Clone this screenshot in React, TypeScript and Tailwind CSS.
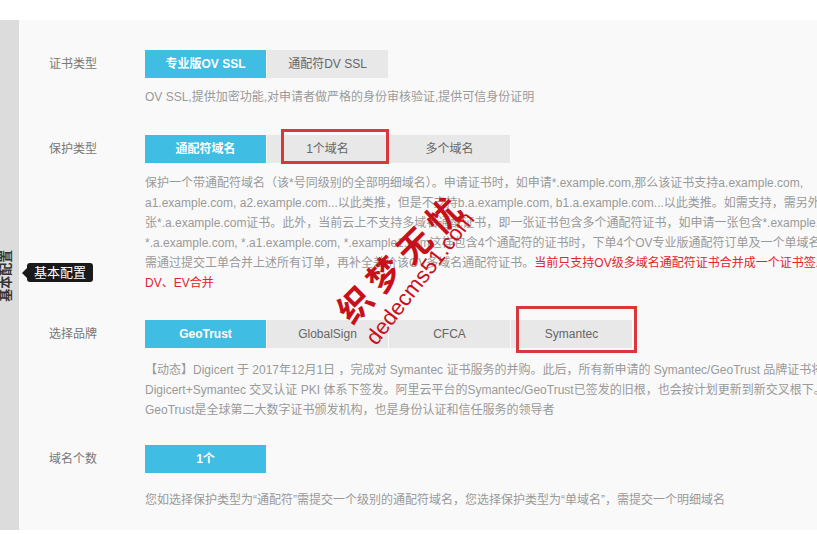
import React from 'react';

type Opt = { label: string; active?: boolean };

const Tabs = ({ options }: { options: Opt[] }) => (
  <div className="flex gap-[1px]">
    {options.map((o) => (
      <div
        key={o.label}
        className={
          o.active
            ? 'w-[121px] h-[28px] shrink-0 flex items-center justify-center bg-[#3fbde3] text-white text-[12px] font-bold'
            : 'w-[121px] h-[28px] shrink-0 flex items-center justify-center bg-[#e8e8e8] text-[#666] text-[12px]'
        }
      >
        {o.label}
      </div>
    ))}
  </div>
);

const Row = ({
  label,
  options,
  lines,
  className,
  gap,
}: {
  label: string;
  options: Opt[];
  lines: React.ReactNode[];
  className?: string;
  gap: string;
}) => (
  <div className={`flex ${className ?? ''}`}>
    <div className="w-[96px] shrink-0 h-[28px] flex items-center text-[12px] text-[#777]">{label}</div>
    <div className="flex flex-col">
      <Tabs options={options} />
      <div className={`${gap} text-[12px] leading-5 text-[#999] whitespace-nowrap`}>
        {lines.map((l, i) => (
          <div key={i}>{l}</div>
        ))}
      </div>
    </div>
  </div>
);

export default function App() {
  return (
    <div className="relative w-[817px] h-[534px] overflow-hidden bg-white font-['Liberation_Sans','Noto_Sans_CJK_SC',sans-serif]">
      <div className="h-[20px]" />
      <div className="flex h-[510px]">
        {/* left rail */}
        <div className="w-[19px] shrink-0 bg-[#dcdcdc] flex flex-col">
          <div className="mt-[228px] w-[12px] h-[56px] flex items-center justify-center">
            <span className="-rotate-90 whitespace-nowrap text-[13px] font-bold text-[#333]">基本配置</span>
          </div>
        </div>

        {/* form panel */}
        <div className="flex-1 min-w-0 overflow-hidden bg-[#f9f9f9] pl-[30px] pt-[30px]">
          <Row
            gap="mt-[9px]"
            label="证书类型"
            options={[{ label: '专业版OV SSL', active: true }, { label: '通配符DV SSL' }]}
            lines={['OV SSL,提供加密功能,对申请者做严格的身份审核验证,提供可信身份证明']}
          />
          <Row
            gap="mt-[10px]"
            className="mt-[28px]"
            label="保护类型"
            options={[{ label: '通配符域名', active: true }, { label: '1个域名' }, { label: '多个域名' }]}
            lines={[
              '保护一个带通配符域名（该*号同级别的全部明细域名）。申请证书时，如申请*.example.com,那么该证书支持a.example.com,',
              'a1.example.com, a2.example.com...以此类推，但是不支持b.a.example.com, b1.a.example.com...以此类推。如需支持，需另外申请一',
              '张*.a.example.com证书。此外，当前云上不支持多域名通配证书，即一张证书包含多个通配符证书，如申请一张包含*.example.com,',
              '*.a.example.com, *.a1.example.com, *.example1.com这样包含4个通配符的证书时，下单4个OV专业版通配符订单及一个单域名',
              <>
                需通过提交工单合并上述所有订单，再补全差价该OV多域名通配符证书。
                <span className="text-[#e0242a]">当前只支持OV级多域名通配符证书合并成一个证书签发，不支持</span>
              </>,
              <span className="text-[#e0242a]">DV、EV合并</span>,
            ]}
          />
          <Row
            gap="mt-[12px]"
            className="mt-[27px]"
            label="选择品牌"
            options={[
              { label: 'GeoTrust', active: true },
              { label: 'GlobalSign' },
              { label: 'CFCA' },
              { label: 'Symantec' },
            ]}
            lines={[
              '【动态】Digicert 于 2017年12月1日 ，完成对 Symantec 证书服务的并购。此后，所有新申请的 Symantec/GeoTrust 品牌证书将在',
              'Digicert+Symantec 交叉认证 PKI 体系下签发。阿里云平台的Symantec/GeoTrust已签发的旧根，也会按计划更新到新交叉根下。',
              'GeoTrust是全球第二大数字证书颁发机构，也是身份认证和信任服务的领导者',
            ]}
          />
          <Row
            gap="mt-[17px]"
            className="mt-[25px]"
            label="域名个数"
            options={[{ label: '1个', active: true }]}
            lines={['您如选择保护类型为“通配符”需提交一个级别的通配符域名，您选择保护类型为“单域名”，需提交一个明细域名']}
          />
        </div>
      </div>

      {/* tooltip */}
      <div className="absolute left-[22px] top-[263px] flex items-center">
        <div className="w-0 h-0 border-y-[5px] border-y-transparent border-r-[5px] border-r-[#1a1a1a]" />
        <div className="h-[19px] px-[7px] rounded-[3px] bg-[#1a1a1a] text-white text-[13px] flex items-center">基本配置</div>
      </div>

      {/* highlight boxes */}
      <div className="absolute left-[281px] top-[129px] w-[108px] h-[35px] border-[3px] border-[#d9383a]" />
      <div className="absolute left-[516px] top-[306px] w-[121px] h-[47px] border-[3px] border-[#d9383a]" />

      {/* watermark */}
      <div className="absolute left-[403px] top-[258px] -translate-x-1/2 -translate-y-1/2 -rotate-45 whitespace-nowrap text-[34px] font-bold tracking-[8px] text-[#c8101a]">
        织梦无忧
      </div>
      <div className="absolute left-[420px] top-[278px] -translate-x-1/2 -translate-y-1/2 -rotate-[52deg] whitespace-nowrap text-[22px] text-[#c8101a]">
        dedecms51.com
      </div>
    </div>
  );
}
